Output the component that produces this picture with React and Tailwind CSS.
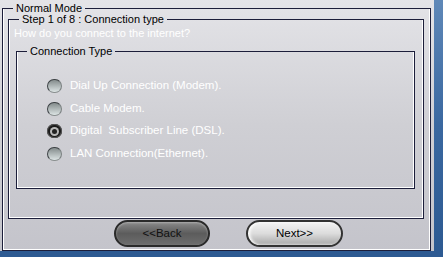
import React, { useState } from 'react';

const options = [
  'Dial Up Connection (Modem).',
  'Cable Modem.',
  'Digital  Subscriber Line (DSL).',
  'LAN Connection(Ethernet).',
];

function Radio({ checked }) {
  if (checked) {
    return (
      <span className="flex h-[14px] w-[15px] shrink-0 items-center justify-center rounded-full bg-[#1a1a1a] shadow-[inset_0_0_0_1px_#555]">
        <span className="flex h-[9px] w-[9px] items-center justify-center rounded-full bg-[#b8b8b8]">
          <span className="h-[5px] w-[5px] rounded-full bg-[#222]" />
        </span>
      </span>
    );
  }
  return (
    <span className="h-[14px] w-[15px] shrink-0 rounded-full border border-[#3e4346] border-b-[#8a9090] border-r-[#7a8080] bg-gradient-to-b from-[#848c8c] via-[#b0b8b8] to-[#dce4e4]" />
  );
}

export default function App() {
  const [selected, setSelected] = useState(2);

  return (
    <div className="flex h-[257px] w-[443px] flex-col bg-[#2d5a92] font-['Liberation_Sans',Arial,sans-serif]">
      <div className="flex h-[251px]">
        <div className="flex h-[251px] w-[434px] flex-col bg-gradient-to-b from-[#e4e4e8] via-[#cfcfd4] to-[#c4c4cb]">
          <fieldset className="mt-[2px] ml-[2px] mr-[3px] flex flex-1 flex-col border border-[#1c1e3a] pl-[5px] pr-[6px] shadow-[inset_1px_0_0_#fff,inset_-1px_-1px_0_#fff]">
            <legend className="ml-[5px] px-[3px] text-[11px] leading-[12px] text-black">Normal Mode</legend>
            <fieldset className="-mt-[1px] flex h-[206px] flex-col border border-[#1c1e3a] pl-[5px] pr-[8px] shadow-[inset_1px_0_0_#fff,inset_-1px_-1px_0_#fff]">
              <legend className="ml-[5px] px-[3px] text-[11px] leading-[12px] text-black">Step 1 of 8 : Connection type</legend>
              <p className="mt-[2px] text-[11px] leading-[13px] text-white">How do you connect to the internet?</p>
              <fieldset className="mt-[5px] ml-[2px] h-[144px] border border-[#1c1e3a] shadow-[inset_1px_0_0_#fff,inset_-1px_-1px_0_#fff]">
                <legend className="ml-[10px] px-[3px] text-[11px] leading-[12px] text-black">Connection Type</legend>
                <div className="flex flex-col gap-[8.5px] pl-[30px] pt-[22px]">
                  {options.map((label, i) => (
                    <label
                      key={label}
                      onClick={() => setSelected(i)}
                      className="flex h-[14px] cursor-pointer items-center gap-[8px] whitespace-pre text-[11.5px] text-white"
                    >
                      <Radio checked={selected === i} />
                      {label}
                    </label>
                  ))}
                </div>
              </fieldset>
            </fieldset>
            <div className="mt-[1px] flex h-[27px] items-center">
              <button className="ml-[106px] flex h-[27px] w-[96px] items-center justify-center rounded-full border-2 border-[#2a2a2a] bg-gradient-to-b from-[#8a8a8a] via-[#5c5c5c] to-[#6e6e6e] text-[11.5px] text-[#111] shadow-[inset_0_1px_2px_#aaa]">
                &lt;&lt;Back
              </button>
              <button className="ml-[36px] flex h-[27px] w-[97px] items-center justify-center rounded-full border-2 border-[#333] bg-gradient-to-b from-[#f4f4f4] via-[#dcdcdc] to-[#a8a8a8] text-[11.5px] text-black shadow-[inset_2px_0_3px_#fff]">
                Next&gt;&gt;
              </button>
            </div>
          </fieldset>
        </div>
        <div className="flex-1 bg-gradient-to-b from-[#5f88b8] via-[#3a68a0] to-[#2d5a92]" />
      </div>
    </div>
  );
}
